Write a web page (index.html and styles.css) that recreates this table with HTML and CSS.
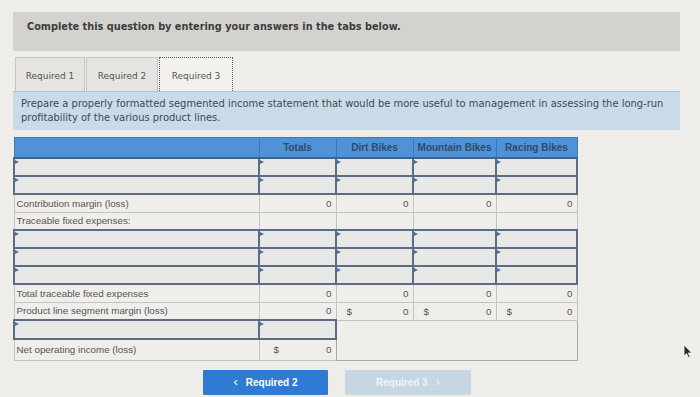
FILE: index.html
```html
<!DOCTYPE html>
<html lang="en">
<head>
<meta charset="utf-8">
<title>Segmented income statement</title>
<link rel="stylesheet" href="styles.css">
</head>
<body>
<div class="page">
  <div class="banner">Complete this question by entering your answers in the tabs below.</div>

  <div class="tabs">
    <div class="tab">Required 1</div>
    <div class="tab">Required 2</div>
    <div class="tab active">Required 3</div>
  </div>

  <div class="instr">Prepare a properly formatted segmented income statement that would be more useful to management in assessing the long-run profitability of the various product lines.</div>

  <table class="stmt">
    <colgroup>
      <col class="c-label"><col class="c-tot"><col class="c-dirt"><col class="c-mtn"><col class="c-race">
    </colgroup>
    <thead>
      <tr class="head">
        <th></th><th>Totals</th><th>Dirt Bikes</th><th>Mountain Bikes</th><th>Racing Bikes</th>
      </tr>
    </thead>
    <tbody>
      <tr class="r-in">
        <td class="in"></td><td class="in"></td><td class="in"></td><td class="in"></td><td class="in"></td>
      </tr>
      <tr class="r-in">
        <td class="in"></td><td class="in"></td><td class="in"></td><td class="in"></td><td class="in"></td>
      </tr>
      <tr class="r-st">
        <td class="lbl">Contribution margin (loss)</td><td class="num">0</td><td class="num">0</td><td class="num">0</td><td class="num">0</td>
      </tr>
      <tr class="r-st">
        <td class="lbl">Traceable fixed expenses:</td><td></td><td></td><td></td><td></td>
      </tr>
      <tr class="r-in">
        <td class="in"></td><td class="in"></td><td class="in"></td><td class="in"></td><td class="in"></td>
      </tr>
      <tr class="r-in">
        <td class="in"></td><td class="in"></td><td class="in"></td><td class="in"></td><td class="in"></td>
      </tr>
      <tr class="r-in">
        <td class="in"></td><td class="in"></td><td class="in"></td><td class="in"></td><td class="in"></td>
      </tr>
      <tr class="r-st">
        <td class="lbl">Total traceable fixed expenses</td><td class="num">0</td><td class="num">0</td><td class="num">0</td><td class="num">0</td>
      </tr>
      <tr class="r-st">
        <td class="lbl">Product line segment margin (loss)</td>
        <td class="num">0</td>
        <td><div class="money"><span>$</span><span>0</span></div></td>
        <td><div class="money"><span>$</span><span>0</span></div></td>
        <td><div class="money"><span>$</span><span>0</span></div></td>
      </tr>
      <tr class="r-in6">
        <td class="in"></td><td class="in"></td>
        <td class="blank" colspan="3" rowspan="2"></td>
      </tr>
      <tr class="r-net">
        <td class="lbl">Net operating income (loss)</td>
        <td><div class="money net"><span>$</span><span>0</span></div></td>
      </tr>
    </tbody>
  </table>

  <div class="nav">
    <button class="btn prev" type="button"><span class="chev">&lsaquo;</span> Required 2</button>
    <button class="btn next" type="button" disabled>Required 3 <span class="chev">&rsaquo;</span></button>
  </div>
</div>

<svg class="cursor" width="10" height="15" viewBox="0 0 10 15" aria-hidden="true">
  <path d="M1 1 L1 12 L3.6 9.6 L5.4 13.6 L7 12.9 L5.3 9 L8.8 9 Z" fill="#2a2a2a" stroke="#f4f4f4" stroke-width="0.8"/>
</svg>
</body>
</html>
```

FILE: styles.css
```css
html, body {
  margin: 0;
  padding: 0;
}

body {
  width: 700px;
  height: 397px;
  overflow: hidden;
  background: #eeede9;
  font-family: "DejaVu Sans", Verdana, sans-serif;
  color: #444;
  position: relative;
}

.page {
  padding: 12px 20px 0 13px;
}

/* top instruction banner */
.banner {
  background: #d3d2cf;
  height: 39px;
  box-sizing: border-box;
  padding: 9px 0 0 14px;
  font-weight: bold;
  font-size: 9.75px;
  color: #3d3d3d;
}

/* tab strip */
.tabs {
  display: flex;
  margin-top: 6px;
  padding-left: 2px;
  height: 34px;
}

.tab {
  box-sizing: border-box;
  width: 70px;
  height: 34px;
  border: 1px solid #c6c6c4;
  border-bottom: none;
  background: #e5e4e1;
  font-size: 9px;
  color: #555;
  display: flex;
  align-items: center;
  justify-content: center;
  padding-top: 2px;
}

.tab + .tab {
  margin-left: 1px;
  width: 72px;
}

.tab.active {
  width: 74px;
  background: #f2f1ee;
  border: 1px dotted #5a6070;
  border-bottom: none;
}

/* question prompt */
.instr {
  background: #c8dbe6;
  border-top: 1px solid #aec3d0;
  height: 39px;
  box-sizing: border-box;
  padding: 5px 8px 0 8px;
  font-size: 9.95px;
  line-height: 14px;
  color: #3c4a55;
}

/* statement grid */
.stmt {
  margin-top: 7px;
  border-collapse: collapse;
  table-layout: fixed;
  width: 563px;
  font-family: "Liberation Sans", Arial, sans-serif;
  font-size: 9.8px;
  color: #555;
}

.c-label { width: 245px; }
.c-tot { width: 77px; }
.c-dirt { width: 77px; }
.c-mtn { width: 83px; }
.c-race { width: 81px; }

.stmt th {
  background: #4f92d6;
  color: #2e4a6c;
  font-weight: bold;
  font-size: 10px;
  height: 19px;
  padding: 0;
  border: 1px solid #3f78b5;
  border-bottom: 2px solid #4a5f80;
}

.stmt td {
  padding: 0 4px;
  border: 1px solid #c3c3c1;
  background: #efeeeb;
  height: 17px;
  box-sizing: border-box;
}

.stmt td.lbl {
  padding-left: 2px;
}

.stmt td.in {
  position: relative;
  background: #e8e8e6;
  border: 2px solid #5d6b86;
}

/* small marker in the corner of each entry cell */
.stmt td.in::before {
  content: "";
  position: absolute;
  left: 0;
  top: 1px;
  border-left: 4px solid #3f6fb0;
  border-top: 2px solid transparent;
  border-bottom: 2px solid transparent;
}

.r-in td { height: 18px; }
.r-st td { height: 18px; }
.r-in6 td { height: 19px; }
.r-net td { height: 21px; }

.lbl {
  text-align: left;
  white-space: nowrap;
}

.num {
  text-align: right;
}

.money {
  display: flex;
  justify-content: space-between;
  padding-left: 6px;
}

.money.net {
  padding-left: 10px;
}

.stmt td.blank {
  background: #efeeeb;
  border: 1px solid #a9a9a9;
}

/* bottom navigation */
.nav {
  display: flex;
  gap: 17px;
  margin-top: 9px;
  padding-left: 190px;
}

.btn {
  width: 125px;
  height: 25px;
  border: none;
  border-radius: 1px;
  font-family: "Liberation Sans", Arial, sans-serif;
  font-weight: bold;
  font-size: 10px;
  color: #fff;
  padding: 0;
  display: flex;
  align-items: center;
  justify-content: center;
  gap: 8px;
}

.btn .chev {
  font-size: 13px;
  font-weight: normal;
  line-height: 1;
  margin-top: -2px;
}

.btn.prev {
  background: #2f7bd3;
}

.btn.next {
  width: 126px;
  background: #c6d7e3;
  color: #eef3f7;
}

.cursor {
  position: absolute;
  left: 683px;
  top: 344px;
}
```
